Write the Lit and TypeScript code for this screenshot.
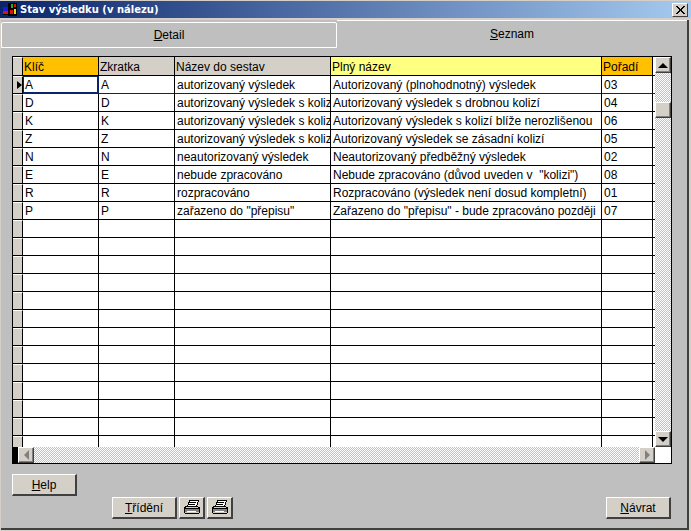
import { LitElement, html, css, svg } from "lit";
import { customElement } from "lit/decorators.js";

const ROWS: string[][] = [
  ["A", "A", "autorizovaný výsledek", "Autorizovaný (plnohodnotný) výsledek", "03"],
  ["D", "D", "autorizovaný výsledek s kolizí", "Autorizovaný výsledek s drobnou kolizí", "04"],
  ["K", "K", "autorizovaný výsledek s kolizí", "Autorizovaný výsledek s kolizí blíže nerozlišenou", "06"],
  ["Z", "Z", "autorizovaný výsledek s kolizí", "Autorizovaný výsledek se zásadní kolizí", "05"],
  ["N", "N", "neautorizovaný výsledek", "Neautorizovaný předběžný výsledek", "02"],
  ["E", "E", "nebude zpracováno", "Nebude zpracováno (důvod uveden v  \"kolizi\")", "08"],
  ["R", "R", "rozpracováno", "Rozpracováno (výsledek není dosud kompletní)", "01"],
  ["P", "P", "zařazeno do \"přepisu\"", "Zařazeno do \"přepisu\" - bude zpracováno později", "07"],
  ...Array.from({ length: 13 }, () => ["", "", "", "", ""]),
];

const printer = svg`<svg width="18" height="15" viewBox="0 0 18 15" shape-rendering="crispEdges">
  <path fill="#fff" stroke="#000" d="M6.500 0.500h9l-2 6h-9z"/>
  <path stroke="#000" d="M6 2.500h7M5 4.500h7"/>
  <path fill="#d4d0c8" stroke="#000" d="M3.500 6.500h10l3 1v5l-1 1h-13l-1-1v-5z"/>
  <path fill="#808080" d="M2 9h14v3H2z"/>
  <path stroke="#000" d="M2 8.500h14"/>
  <path stroke="#fff" d="M4 11.500h9"/>
</svg>`;

@customElement("app-root")
export class AppRoot extends LitElement {
  static styles = css`
    :host { display: block; width: 691px; height: 531px; overflow: hidden; }
    * { box-sizing: border-box; }
    .win {
      width: 691px; height: 531px; background: #d4d0c8; padding-top: 1px;
      font-family: "Liberation Sans", Arial, sans-serif; font-size: 12px; color: #000;
      display: flex; flex-direction: column;
    }
    .title {
      height: 17px; flex: none;
      background: linear-gradient(90deg, #0a246a, #a6caf0);
      display: flex; align-items: center; padding: 0 3px 0 2px; gap: 2px;
      color: #fff; font: bold 10px "DejaVu Sans", Verdana, sans-serif;
    }
    .title .t { flex: 1; }
    .close {
      width: 16px; height: 14px; background: #d4d0c8; flex: none;
      border: 1px solid; border-color: #fff #404040 #404040 #fff;
      display: flex; align-items: center; justify-content: center;
    }
    .panel {
      margin: 2px 2px 1px 1px; flex: 1; min-height: 0; background: #bfbfbf;
      border-right: 2px solid #404040; border-bottom: 2px solid #404040;
      display: flex; flex-direction: column;
    }
    .tabs { display: flex; height: 36px; flex: none; align-items: flex-start; }
    .tab { display: flex; align-items: center; justify-content: center; }
    .tab.detail { width: 336px; height: 26px; margin-top: 2px; border: 1px solid #fff; border-radius: 2px 2px 0 0; }
    .tab.list { flex: 1; height: 26px; border-top: 1px solid #fff; }
    .grid {
      margin-left: 11px; width: 660px; height: 408px; flex: none;
      border: 1px solid #000; overflow: hidden;
      display: grid; grid-template-columns: 642px 16px; grid-template-rows: 390px 16px;
    }
    .cells { overflow: hidden; min-height: 0; background: #fff; }
    .row { display: grid; grid-template-columns: 10px 76px 76px 156px 271px 51px 2px; height: 18px; }
    .row > div {
      border-right: 1px solid #000; border-bottom: 1px solid #000;
      padding-left: 2px; line-height: 19px; white-space: pre; overflow: hidden;
      background: #fff;
    }
    .row > .end { border-right: 0; padding: 0; }
    .row.cur > div { border-bottom-color: #0a246a; }
    .row > .ind {
      background: #d4d0c8; padding: 0; border-top: 1px solid #fff;
      display: flex; align-items: center; justify-content: flex-end;
    }
    .row.cur > .ind { border-bottom-color: #000; }
    .row > .sel { border-right-color: #0a246a; box-shadow: inset 0 0 0 1px #0a246a; }
    .row.head { height: 19px; }
    .row.head > div { background: #d4d0c8; line-height: 20px; padding-left: 1px; }
    .row.head > .ind { padding: 0; }
    .row.head > .key { background: #ffc000; }
    .row.head > .full { background: #ffff80; }
    .row.head > .end { background: #fff; padding: 0; }
    .arrow { width: 0; height: 0; border-left: 5px solid #000; border-top: 4px solid transparent; border-bottom: 4px solid transparent; }
    .vs, .hs {
      background-color: #fff;
      background-image: conic-gradient(#c0c0c0 25%, transparent 0 50%, #c0c0c0 0 75%, transparent 0);
      background-size: 2px 2px;
      display: flex;
    }
    .vs { flex-direction: column; }
    .vs .track { flex: 1; padding-top: 29px; }
    .hs { justify-content: space-between; }
    .btnb, .thumb {
      width: 16px; height: 16px; background: #d4d0c8; flex: none;
      border: 1px solid; border-color: #fff #404040 #404040 #fff;
      box-shadow: inset -1px -1px 0 #808080;
      display: flex; align-items: center; justify-content: center;
    }
    .corner { background: #fff; }
    .blk { width: 5px; background: #000; flex: none; }
    .hs .mid { flex: 1; display: flex; justify-content: space-between; }
    .up { border-left: 5px solid transparent; border-right: 5px solid transparent; border-bottom: 5px solid #000; }
    .down { border-left: 5px solid transparent; border-right: 5px solid transparent; border-top: 5px solid #000; }
    .left { border-top: 5px solid transparent; border-bottom: 5px solid transparent; border-right: 5px solid #808080; }
    .right { border-top: 5px solid transparent; border-bottom: 5px solid transparent; border-left: 5px solid #808080; }
    .foot { display: flex; flex-direction: column; padding: 10px 16px 0 11px; gap: 1px; }
    .foot .r2 { display: flex; padding-left: 100px; gap: 2px; }
    .btn {
      height: 22px; width: 65px; background: #d4d0c8; flex: none; padding-top: 1px;
      border-style: solid; border-color: #fff #404040 #404040 #fff;
      border-width: 1px 2px 2px 1px;
      display: flex; align-items: center; justify-content: center;
    }
    .btn.ic { width: 26px; padding-top: 0; }
    .btn.back { margin-left: auto; }
  `;

  render() {
    return html`<div class="win">
      <div class="title">
        <svg width="16" height="15" viewBox="0 0 16 15" shape-rendering="crispEdges">
          <rect x="1" y="5" width="6" height="8" fill="#000"/>
          <rect x="6" y="1" width="9" height="13" fill="#000"/>
          <rect x="1" y="5" width="5" height="4" fill="#1a1ae0"/>
          <rect x="1" y="9" width="5" height="3" fill="#e01010"/>
          <rect x="9" y="2" width="2" height="4" fill="#10c010"/>
          <rect x="12" y="2" width="2" height="3" fill="#e01010"/>
          <rect x="8" y="8" width="3" height="4" fill="#e01010"/>
          <rect x="12" y="7" width="2" height="5" fill="#e8e010"/>
        </svg>
        <span class="t">Stav výsledku (v nálezu)</span>
        <div class="close"><svg width="9" height="8" viewBox="0 0 9 8" shape-rendering="crispEdges"><path d="M0 0h2l2.500 3L7 0h2L5.500 4 9 8H7L4.500 5 2 8H0l3.500-4z" fill="#000"/></svg></div>
      </div>
      <div class="panel">
        <div class="tabs">
          <div class="tab detail"><span><u>D</u>etail</span></div>
          <div class="tab list"><span><u>S</u>eznam</span></div>
        </div>
        <div class="grid">
          <div class="cells">
            <div class="row head">
              <div class="ind"></div>
              <div class="key">Klíč</div><div>Zkratka</div><div>Název do sestav</div>
              <div class="full">Plný název</div><div class="key">Pořadí</div><div class="end"></div>
            </div>
            ${ROWS.map((r, i) => html`<div class="row ${i === 0 ? "cur" : ""}">
              <div class="ind">${i === 0 ? html`<span class="arrow"></span>` : ""}</div>
              ${r.map((c, j) => html`<div class="${i === 0 && j === 0 ? "sel" : ""}">${c}</div>`)}
              <div class="end"></div>
            </div>`)}
          </div>
          <div class="vs">
            <div class="btnb"><span class="up"></span></div>
            <div class="track"><div class="thumb"></div></div>
            <div class="btnb"><span class="down"></span></div>
          </div>
          <div class="hs">
            <span class="blk"></span>
            <div class="mid">
              <div class="btnb"><span class="left"></span></div>
              <div class="btnb"><span class="right"></span></div>
            </div>
          </div>
          <div class="corner"></div>
        </div>
        <div class="foot">
          <div class="btn"><span><u>H</u>elp</span></div>
          <div class="r2">
            <div class="btn"><span><u>T</u>řídění</span></div>
            <div class="btn ic">${printer}</div>
            <div class="btn ic">${printer}</div>
            <div class="btn back"><span><u>N</u>ávrat</span></div>
          </div>
        </div>
      </div>
    </div>`;
  }
}
